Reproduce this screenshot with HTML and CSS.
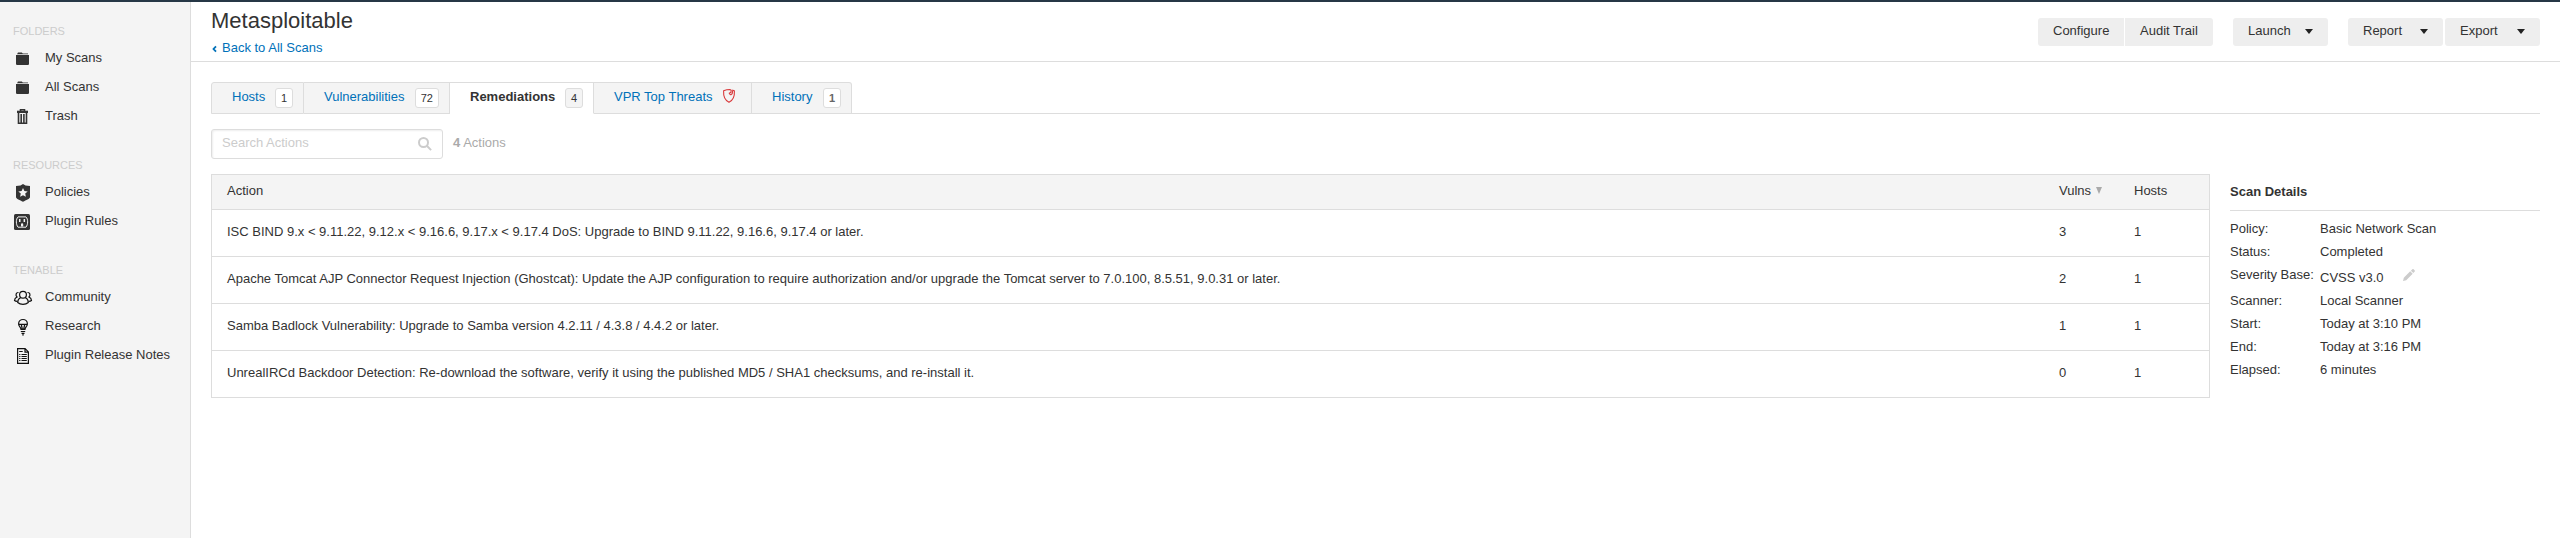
FILE: index.html
```html
<!DOCTYPE html>
<html lang="en">
<head>
<meta charset="utf-8">
<title>Metasploitable</title>
<link rel="stylesheet" href="styles.css">
</head>
<body>
<div class="app">
  <nav class="sidebar">
    <section class="group">
      <h2 class="group-title">FOLDERS</h2>
      <a class="item"><svg class="icon" viewBox="0 0 20 20"><path d="M3 6h13v9.200l-.8.8H3.800l-.8-.8z"/><path d="M4 5.200l1-1.700h3.800l1 .9H15v.8z"/></svg>My Scans</a>
      <a class="item"><svg class="icon" viewBox="0 0 20 20"><path d="M3 6h13v9.200l-.8.8H3.800l-.8-.8z"/><path d="M4 5.200l1-1.700h3.800l1 .9H15v.8z"/></svg>All Scans</a>
      <a class="item"><svg class="icon" viewBox="0 0 20 20"><path class="line bold" d="M7.500 4V2.700h4V4M5.500 6v10.200h8V6M8.200 7v8.500M10.900 7v8.500"/><path d="M4 3.700h11v2.300H4z"/></svg>Trash</a>
    </section>
    <section class="group">
      <h2 class="group-title">RESOURCES</h2>
      <a class="item"><svg class="icon" viewBox="0 0 20 20"><path d="M10 1l2.500 1.400L17 3v11c0 2-4 3-7 4.800-3-1.800-7-2.800-7-4.800V3l4.500-.6z"/><path class="cut" d="M10 5l1.400 3 3.300.4-2.500 2.200.7 3.200-2.900-1.600-2.900 1.600.7-3.200-2.500-2.200 3.300-.4z"/></svg>Policies</a>
      <a class="item"><svg class="icon" viewBox="0 0 20 20"><rect x="1" y="2" width="16" height="16" rx="1.500"/><path class="cut-line" d="M5 4.900h8c2.200 2.300 2.200 7.500 0 10.300H5C2.800 12.400 2.800 7.200 5 4.900z"/><path class="cut" d="M6 7h1.500v3H6zM10.600 7h1.500v3h-1.500zM8 14.500v-2.200a1.100 1.100 0 0 1 2.200 0v2.200z"/></svg>Plugin Rules</a>
    </section>
    <section class="group">
      <h2 class="group-title">TENABLE</h2>
      <a class="item"><svg class="icon black" viewBox="0 0 20 20"><circle class="line" cx="10" cy="6.700" r="3.400"/><path class="line" d="M7.600 9.800c-2 .8-2.900 2.300-2.900 4.700 2.800 2.500 7.800 2.500 10.600 0 0-2.400-.9-3.900-2.900-4.700M5.500 4.500C3 4.300 2.200 7.200 4 9c-1.800.7-2.400 1.700-2.500 3.500.8.600 1.500.8 2.600.9M14.500 4.500C17 4.300 17.800 7.200 16 9c1.800.7 2.400 1.700 2.500 3.500-.8.600-1.500.8-2.600.9"/></svg>Community</a>
      <a class="item"><svg class="icon black" viewBox="0 0 20 20"><path class="line" d="M8 12.300c0-2-2.400-2.900-2.400-5.400a4.400 4.400 0 0 1 8.800 0c0 2.500-2.400 3.400-2.400 5.400zM5.800 7.300h8.400M8.300 7.500l1 4.500M11.700 7.500l-1 4.500M7.800 14.500h4.400M8.500 16.400h3M9.200 17.900h1.600"/></svg>Research</a>
      <a class="item"><svg class="icon black" viewBox="0 0 20 20"><path class="line" d="M4.600 2.600h7.500l3.300 3.300v11.500H4.600zM12 2.600v3.500h3.400M6.200 5.500h3.500M6.200 8.500h1.200M8.500 8.500h5.300M6.200 10.500h1.200M8.500 10.500h5.300M6.200 12.500h1.200M8.500 12.500h5.300M6.200 14.500h1.200M8.500 14.500h5.300"/></svg>Plugin Release Notes</a>
    </section>
  </nav>
  <div class="main">
    <header class="header">
      <div class="heading">
        <h1 class="title">Metasploitable</h1>
        <a class="back"><svg class="chevron" viewBox="0 0 5 8"><path d="M4 1.300L1.500 4 4 6.700"/></svg>Back to All Scans</a>
      </div>
      <div class="toolbar">
        <div class="pair"><button class="btn first">Configure</button><button class="btn last">Audit Trail</button></div>
        <button class="btn menu">Launch<i class="caret"></i></button>
        <div class="pair spaced"><button class="btn menu">Report<i class="caret"></i></button><button class="btn menu">Export<i class="caret"></i></button></div>
      </div>
    </header>
    <div class="content">
      <div class="tabs">
        <a class="tab hosts">Hosts<span class="badge">1</span></a>
        <a class="tab vulns">Vulnerabilities<span class="badge">72</span></a>
        <a class="tab remediations active">Remediations<span class="badge">4</span></a>
        <a class="tab threats">VPR Top Threats<svg class="shield" viewBox="0 0 14 16"><path d="M8 1.500C5.500 1.500 3.500 2 1.600 2.800c-.3 5 .7 9.300 5.400 11.500 4.700-2.200 5.700-6.500 5.400-11.500l-1.600-.6-.6 3.500-1.700 1.500M8 1.500l1.200.8-.3 2-1.600.8 1 1.600"/></svg></a>
        <a class="tab history">History<span class="badge muted">1</span></a>
        <div class="tab-rule"></div>
      </div>
      <div class="filter">
        <div class="search"><span>Search Actions</span><svg class="lens" viewBox="0 0 14 14"><circle cx="5.500" cy="5.500" r="4.500"/><path d="M8.800 8.800l4.300 4.300"/></svg></div>
        <div class="count"><b>4</b> Actions</div>
      </div>
      <div class="columns">
        <div class="table">
          <div class="row head"><div>Action</div><div>Vulns<i class="sort"></i></div><div>Hosts</div></div>
          <div class="row"><div>ISC BIND 9.x &lt; 9.11.22, 9.12.x &lt; 9.16.6, 9.17.x &lt; 9.17.4 DoS: Upgrade to BIND 9.11.22, 9.16.6, 9.17.4 or later.</div><div>3</div><div>1</div></div>
          <div class="row"><div>Apache Tomcat AJP Connector Request Injection (Ghostcat): Update the AJP configuration to require authorization and/or upgrade the Tomcat server to 7.0.100, 8.5.51, 9.0.31 or later.</div><div>2</div><div>1</div></div>
          <div class="row"><div>Samba Badlock Vulnerability: Upgrade to Samba version 4.2.11 / 4.3.8 / 4.4.2 or later.</div><div>1</div><div>1</div></div>
          <div class="row"><div>UnrealIRCd Backdoor Detection: Re-download the software, verify it using the published MD5 / SHA1 checksums, and re-install it.</div><div>0</div><div>1</div></div>
        </div>
        <aside class="details">
          <h3 class="details-title">Scan Details</h3>
          <dl class="facts">
            <dt>Policy:</dt><dd>Basic Network Scan</dd>
            <dt>Status:</dt><dd>Completed</dd>
            <dt class="severity">Severity Base:</dt><dd class="score">CVSS v3.0<svg class="pencil" viewBox="0 0 12 12"><path d="M0 12l.8-3.200L7.200 2.300l2.500 2.500L3.200 11.200zM7.900 1.700L9.400.3c.4-.4.800-.4 1.200 0l1.100 1.100c.4.4.4.800 0 1.200L10.300 4z"/></svg></dd>
            <dt>Scanner:</dt><dd>Local Scanner</dd>
            <dt>Start:</dt><dd>Today at 3:10 PM</dd>
            <dt>End:</dt><dd>Today at 3:16 PM</dd>
            <dt>Elapsed:</dt><dd>6 minutes</dd>
          </dl>
        </aside>
      </div>
    </div>
  </div>
</div>
</body>
</html>
```
FILE: styles.css
```css
* { box-sizing: border-box; }
body { margin: 0; background: #fff; color: #333; font: 13px/15px "Liberation Sans", Arial, sans-serif; }
h1, h2, h3, dl, dd { margin: 0; }
.app { display: flex; height: 538px; border-top: 2px solid #263746; overflow: hidden; }

.sidebar { width: 191px; flex: none; background: #f4f4f4; border-right: 1px solid #ddd; padding: 23px 0 0 13px; }
.group { margin-bottom: 29px; }
.group-title { font-size: 11px; line-height: 12px; font-weight: normal; color: #ccc; margin-bottom: 6px; }
.item { display: flex; align-items: center; gap: 12px; height: 29px; white-space: nowrap; }
.icon { width: 20px; height: 20px; flex: none; margin-top: 3px; fill: #333; stroke: #333; stroke-width: 0; }
.icon.black { fill: #111; stroke: #111; }
.icon .line { fill: none; stroke-width: 1.2; }
.icon .line.bold { stroke-width: 1.6; }
.icon .cut { fill: #f4f4f4; }
.icon .cut-line { fill: none; stroke: #f4f4f4; stroke-width: 1; }

.main { flex: 1; min-width: 0; }
.header { display: flex; justify-content: space-between; height: 60px; padding: 0 20px; border-bottom: 1px solid #ddd; }
.heading { padding-top: 6px; }
.title { font-size: 22px; line-height: 25px; font-weight: normal; }
.back { display: flex; align-items: center; gap: 5px; margin-top: 7px; padding-left: 1px; color: #0071b9; }
.chevron { width: 5px; height: 8px; margin-top: 3px; fill: none; stroke: #0071b9; stroke-width: 1.8; }
.toolbar { display: flex; gap: 20px; padding-top: 16px; }
.pair { display: flex; gap: 1px; }
.pair.spaced { gap: 2px; }
.btn { display: flex; align-items: center; justify-content: space-between; height: 28px; padding: 0 15px 3px; border: 0; border-radius: 3px; background: #eee; color: #333; font: inherit; }
.btn.first { width: 86px; border-radius: 3px 0 0 3px; }
.btn.last { width: 88px; border-radius: 0 3px 3px 0; }
.btn.menu { width: 95px; }
.caret { border: 4px solid transparent; border-top: 5px solid #222; border-bottom: 0; margin-top: 2px; }

.content { padding: 20px 20px 0; }
.tabs { display: flex; height: 32px; }
.tab { display: flex; justify-content: space-between; align-items: flex-start; padding: 6px 10px 0 20px; background: #f4f4f4; border: 1px solid #ddd; border-left: 0; color: #0071b9; line-height: 16px; white-space: nowrap; }
.tab.hosts { width: 93px; border-left: 1px solid #ddd; border-radius: 3px 0 0 0; }
.tab.vulns { width: 146px; }
.tab.remediations { width: 144px; }
.tab.threats { width: 158px; padding-right: 15px; }
.tab.history { width: 100px; border-radius: 0 3px 0 0; }
.tab.active { background: #fff; border-bottom-color: #fff; color: #333; font-weight: bold; }
.tab-rule { flex: 1; border-bottom: 1px solid #ddd; }
.badge { height: 20px; margin-top: -1px; padding: 0 5px; border: 1px solid #ddd; border-radius: 3px; background: #fff; color: #333; font-size: 11px; line-height: 18px; font-weight: normal; }
.active .badge { background: #f4f4f4; }
.badge.muted { color: #666; font-weight: bold; }
.shield { width: 14px; height: 16px; margin-top: -1px; fill: none; stroke: #d9383a; stroke-width: 1.1; }

.filter { display: flex; gap: 10px; margin-top: 15px; }
.search { display: flex; justify-content: space-between; width: 232px; height: 30px; padding: 5px 10px 0; border: 1px solid #ddd; border-radius: 3px; color: #ccc; box-shadow: inset 1px 1px 2px #eee; }
.lens { width: 14px; height: 14px; margin-top: 2px; fill: none; stroke: #ccc; stroke-width: 2; }
.count { padding-top: 6px; color: #aaa; }

.columns { display: flex; gap: 20px; margin-top: 15px; }
.table { width: 1999px; flex: none; border: 1px solid #ddd; }
.row { display: grid; grid-template-columns: 1832px 75px 1fr; height: 47px; padding: 14px 0 0 15px; border-top: 1px solid #ddd; }
.row.head { height: 34px; padding-top: 8px; background: #f4f4f4; border-top: 0; }
.sort { display: inline-block; margin: 0 0 1px 5px; border: 3.5px solid transparent; border-top: 7px solid #aaa; border-bottom: 0; }
.details { flex: 1; padding-top: 10px; }
.details-title { height: 27px; font-size: 13px; line-height: 15px; border-bottom: 1px solid #ddd; }
.facts { display: grid; grid-template-columns: 90px 1fr; grid-template-rows: 23px 23px 26px 23px 23px 23px 23px; padding-top: 10px; white-space: nowrap; }
.score { display: flex; align-items: flex-start; gap: 19px; padding-top: 3px; }
.pencil { width: 12px; height: 12px; margin-top: -1px; fill: #ccc; }
```
